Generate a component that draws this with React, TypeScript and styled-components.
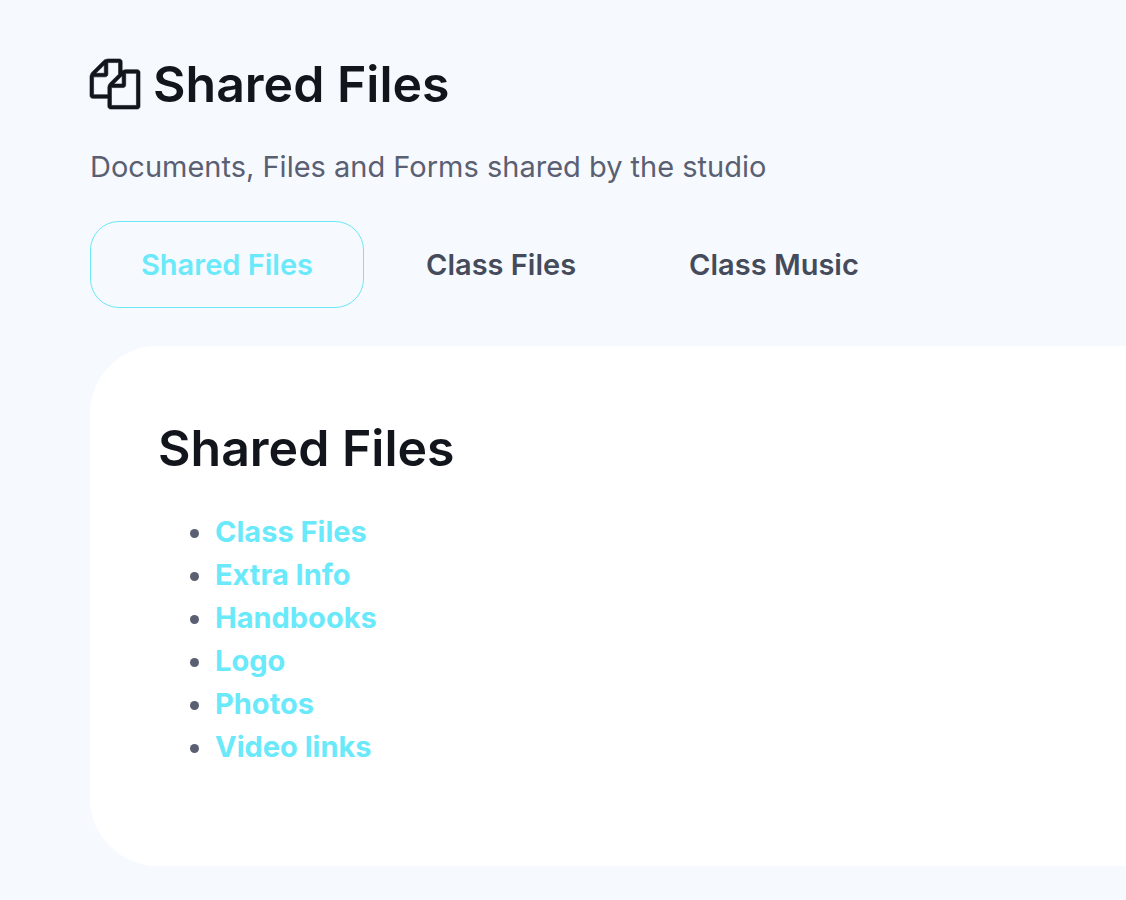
import React from "react";
import styled, { createGlobalStyle } from "styled-components";

const GlobalStyle = createGlobalStyle`
  *, *::before, *::after { box-sizing: border-box; }
  body {
    margin: 0;
    background: #f6faff;
    color: #5a6072;
    font-family: Inter, "Liberation Sans", sans-serif;
    font-size: 29px;
    line-height: 43px;
    overflow-x: hidden;
  }
`;

const Page = styled.main`
  padding: 54px 0 34px 90px;
`;

const Title = styled.h1`
  display: flex;
  align-items: center;
  gap: 13px;
  margin: 0;
  color: #12161c;
  font-size: 50px;
  font-weight: 600;
  line-height: 60px;
`;

const CopyIcon = styled.svg`
  width: 50px;
  height: 50px;
  flex: none;
  overflow: visible;
`;

const Subtitle = styled.p`
  margin: 31px 0 33px;
`;

const Tabs = styled.nav`
  display: flex;
  gap: 11px;
`;

const Tab = styled.button<{ $active?: boolean }>`
  padding: 21px 50px;
  border: 1px solid ${(p) => (p.$active ? "#6be8f6" : "transparent")};
  border-radius: 29px;
  background: transparent;
  color: ${(p) => (p.$active ? "#6ae9fa" : "#454b5b")};
  font: inherit;
  font-weight: 600;
  cursor: pointer;
`;

const Card = styled.section`
  margin-top: 38px;
  padding: 72px 68px 98px;
  border-radius: 68px 0 0 68px;
  background: #ffffff;
`;

const CardTitle = styled(Title).attrs({ as: "h2" })``;

const FileList = styled.ul`
  margin: 32px 0 0;
  padding: 0 0 0 57px;
`;

const FileLink = styled.a`
  color: #6ae9fa;
  font-weight: 700;
  text-decoration: none;
`;

const tabs = ["Shared Files", "Class Files", "Class Music"];
const files = ["Class Files", "Extra Info", "Handbooks", "Logo", "Photos", "Video links"];

export default function App() {
  return (
    <>
      <GlobalStyle />
      <Page>
        <Title>
          <CopyIcon viewBox="0 0 1792 1792" fill="currentColor" stroke="currentColor" strokeWidth="22" aria-hidden="true">
            <path d="M1696 384q40 0 68 28t28 68v1216q0 40-28 68t-68 28h-960q-40 0-68-28t-28-68v-288h-544q-40 0-68-28t-28-68v-672q0-40 20-88t48-76l408-408q28-28 76-48t88-20h416q40 0 68 28t28 68v328q68-40 128-40h416zm-544 213l-299 299h299v-299zm-640-384l-299 299h299v-299zm196 647l316-316v-416h-384v416q0 40-28 68t-68 28h-416v640h512v-256q0-40 20-88t48-76zm956 804v-1152h-384v416q0 40-28 68t-68 28h-416v640h896z" />
          </CopyIcon>
          Shared Files
        </Title>
        <Subtitle>Documents, Files and Forms shared by the studio</Subtitle>
        <Tabs aria-label="File sections">
          {tabs.map((name, i) => (
            <Tab key={name} type="button" $active={i === 0} aria-pressed={i === 0}>
              {name}
            </Tab>
          ))}
        </Tabs>
        <Card>
          <CardTitle>Shared Files</CardTitle>
          <FileList>
            {files.map((name) => (
              <li key={name}>
                <FileLink href="#">{name}</FileLink>
              </li>
            ))}
          </FileList>
        </Card>
      </Page>
    </>
  );
}
